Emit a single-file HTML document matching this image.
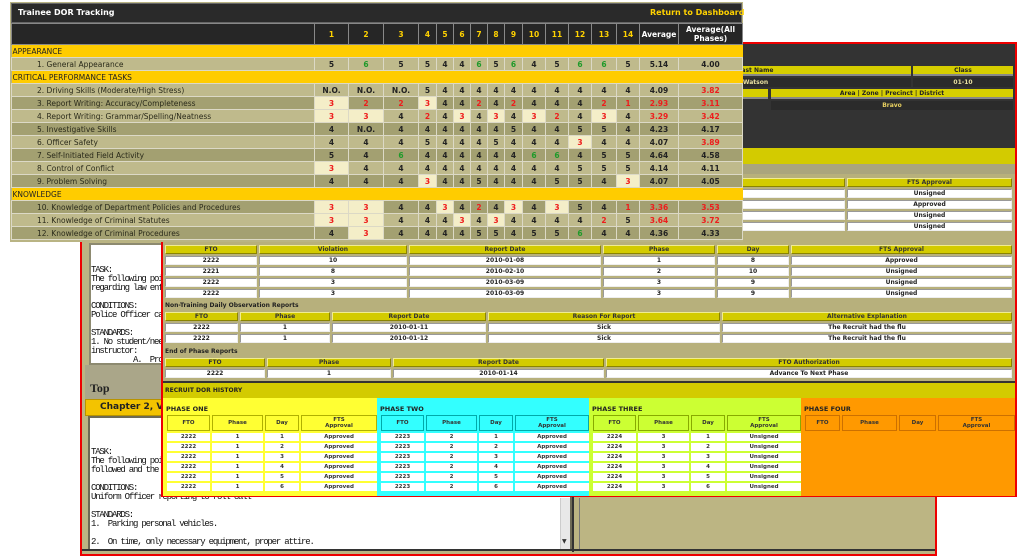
<!DOCTYPE html>
<html><head><meta charset="utf-8">
<style>
*{margin:0;padding:0;box-sizing:border-box}
body{width:1024px;height:560px;background:#fff;position:relative;overflow:hidden;font-family:"DejaVu Sans","Liberation Sans",sans-serif}
.a{position:absolute}
#back{left:80px;top:200px;width:857px;height:356px;border:2px solid #e00;background:#bcb583;z-index:1}
.mono{font-family:"Liberation Mono","DejaVu Sans Mono",monospace;font-size:9px;letter-spacing:-1.2px;line-height:9px;color:#111;white-space:pre}
#mid{left:161px;top:42px;width:856px;height:455px;border:2px solid #e00;background:#b7b07c;z-index:2}
.tb{position:absolute;border-collapse:separate;border-spacing:2px;table-layout:fixed;font-size:6px;font-weight:bold;color:#222;text-align:center}
.tb th{background:#d3cb00;height:9px;border:1px solid #f0ec90;border-right-color:#8a8400;border-bottom-color:#8a8400;line-height:7px;font-weight:bold;color:#333}
.tb td{background:#fff;height:9px;border:1px solid #999;border-right-color:#eee;border-bottom-color:#eee;line-height:7px}
.lbl{font-size:6px;font-weight:bold;color:#222}
.ph{position:absolute;top:398px;height:98px;z-index:3}
.ph .t{position:absolute;left:3px;top:7px;font-size:6.5px;font-weight:bold;color:#222}
.pt{position:absolute;top:15px;left:2px;border-collapse:separate;border-spacing:2px;table-layout:fixed;font-size:5.5px;font-weight:bold;color:#333;text-align:center}
.pt th{height:16px;line-height:6px;font-weight:bold}
.pt td{background:#fff;height:8px;line-height:6px}
#front{left:10px;top:2px;width:733px;height:240px;background:#b9b484;z-index:5}
#ft{position:absolute;left:1px;top:21px;border-collapse:collapse;table-layout:fixed;font-size:7.5px;color:#222}
#ft td{border:1px solid #dcd9c6;text-align:center;font-weight:bold;height:13px;padding:0;line-height:11px;white-space:nowrap;overflow:hidden}
#ft td.lb{text-align:left;font-weight:normal;padding-left:25px;color:#2a2a1a}
#ft tr.h td{background:#262626;color:#ffd200;height:21px;border-color:#888;line-height:9px;white-space:normal}
#ft tr.h td.w{color:#fff}
#ft tr.s td{background:#ffcc00;text-align:left;font-weight:normal;border:none;padding-left:1px;color:#222;height:13px}
#ft tr.l td{background:#bfba8c}
#ft tr.d td{background:#a3a071}
#ft tr td.c{background:#f4eec8}
#ft td.r{color:#ee1c1c}
#ft td.g{color:#1f9a2a}
</style></head><body>

<div id="back" class="a">
  <div class="a" style="left:7px;top:41px;width:500px;height:122px;background:#fff;border:2px solid #8d8a70"></div>
  <div class="a mono" style="left:9px;top:64px;">TASK:
The following points
regarding law enforcement

CONDITIONS:
Police Officer carrying

STANDARDS:
1. No student/need
instructor:
          A.  Proper</div>
  <div class="a" style="left:3px;top:163px;width:500px;height:35px;background:#aaa689"></div>
  <div class="a" style="left:8px;top:179px;font-family:'Liberation Serif',serif;font-weight:bold;font-size:12px;color:#222">Top</div>
  <div class="a" style="left:3px;top:197px;width:500px;height:17px;background:#f3c300;border:1px solid #b89300"></div>
  <div class="a" style="left:18px;top:200px;font-size:9px;font-weight:bold;color:#222">Chapter 2, Version</div>
  <div class="a" style="left:6px;top:214px;width:484px;height:135px;background:#fff;border:2px solid #6d6a55"></div>
  <div class="a" style="left:478px;top:296px;width:10px;height:51px;background:#e8e8e8;border-left:1px solid #ccc"></div>
  <div class="a" style="left:480px;top:336px;font-size:6px;color:#333">&#9660;</div>
  <div class="a mono" style="left:9px;top:246px;">TASK:
The following points
followed and the

CONDITIONS:
Uniform Officer reporting to roll call

STANDARDS:
1.  Parking personal vehicles.

2.  On time, only necessary equipment, proper attire.</div>
  <div class="a" style="left:490px;top:40px;width:2px;height:310px;background:#333"></div>
  <div class="a" style="left:497px;top:296px;width:1px;height:52px;background:#777"></div>
  <div class="a" style="left:0;top:347px;width:853px;height:2px;background:#333"></div>
</div>

<div id="mid" class="a"></div>
<div class="a" style="left:163px;top:44px;width:852px;height:104px;background:#333;z-index:2"></div>
<div class="a" style="left:600px;top:66px;width:311px;height:10px;background:#d6ce00;border-bottom:2px solid #888;z-index:2;font-size:6px;font-weight:bold;text-align:center;line-height:9px;color:#222">Last Name</div>
<div class="a" style="left:913px;top:66px;width:100px;height:10px;background:#d6ce00;border-bottom:2px solid #888;z-index:2;font-size:6px;font-weight:bold;text-align:center;line-height:9px;color:#222">Class</div>
<div class="a" style="left:600px;top:78px;width:311px;height:9px;background:#2b2b2b;z-index:2;font-size:6px;font-weight:bold;text-align:center;line-height:9px;color:#e8e0a0">Watson</div>
<div class="a" style="left:913px;top:78px;width:100px;height:9px;background:#2b2b2b;z-index:2;font-size:6px;font-weight:bold;text-align:center;line-height:9px;color:#e8e0a0">01-10</div>
<div class="a" style="left:600px;top:89px;width:168px;height:10px;background:#d6ce00;border-bottom:2px solid #888;z-index:2"></div>
<div class="a" style="left:771px;top:89px;width:242px;height:10px;background:#d6ce00;border-bottom:2px solid #888;z-index:2;font-size:6px;font-weight:bold;text-align:center;line-height:9px;color:#222">Area | Zone | Precinct | District</div>
<div class="a" style="left:771px;top:101px;width:242px;height:9px;background:#2b2b2b;z-index:2;font-size:6px;font-weight:bold;text-align:center;line-height:9px;color:#e8d060">Bravo</div>
<div class="a" style="left:163px;top:148px;width:852px;height:16px;background:#d3cb00;z-index:2"></div>
<div class="a" style="left:163px;top:164px;width:852px;height:10px;background:#aaa57d;z-index:2"></div>

<table class="tb" style="left:600px;top:176px;width:414px;z-index:2">
<colgroup><col style="width:243px"><col style="width:165px"></colgroup>
<tr><th></th><th>FTS Approval</th></tr>
<tr><td></td><td>Unsigned</td></tr>
<tr><td></td><td>Approved</td></tr>
<tr><td></td><td>Unsigned</td></tr>
<tr><td></td><td>Unsigned</td></tr>
</table>

<table class="tb" style="left:163px;top:243px;width:851px;z-index:2">
<colgroup><col style="width:92px"><col style="width:148px"><col style="width:192px"><col style="width:112px"><col style="width:72px"><col style="width:221px"></colgroup>
<tr><th>FTO</th><th>Violation</th><th>Report Date</th><th>Phase</th><th>Day</th><th>FTS Approval</th></tr>
<tr><td>2222</td><td>10</td><td>2010-01-08</td><td>1</td><td>8</td><td>Approved</td></tr>
<tr><td>2221</td><td>8</td><td>2010-02-10</td><td>2</td><td>10</td><td>Unsigned</td></tr>
<tr><td>2222</td><td>3</td><td>2010-03-09</td><td>3</td><td>9</td><td>Unsigned</td></tr>
<tr><td>2222</td><td>3</td><td>2010-03-09</td><td>3</td><td>9</td><td>Unsigned</td></tr>
</table>
<div class="a lbl" style="left:165px;top:302px;z-index:2">Non-Training Daily Observation Reports</div>
<table class="tb" style="left:163px;top:310px;width:851px;z-index:2">
<colgroup><col style="width:73px"><col style="width:90px"><col style="width:154px"><col style="width:232px"><col style="width:290px"></colgroup>
<tr><th>FTO</th><th>Phase</th><th>Report Date</th><th>Reason For Report</th><th>Alternative Explanation</th></tr>
<tr><td>2222</td><td>1</td><td>2010-01-11</td><td>Sick</td><td>The Recruit had the flu</td></tr>
<tr><td>2222</td><td>1</td><td>2010-01-12</td><td>Sick</td><td>The Recruit had the flu</td></tr>
</table>
<div class="a lbl" style="left:165px;top:348px;z-index:2">End of Phase Reports</div>
<table class="tb" style="left:163px;top:356px;width:851px;z-index:2">
<colgroup><col style="width:100px"><col style="width:124px"><col style="width:211px"><col style="width:406px"></colgroup>
<tr><th>FTO</th><th>Phase</th><th>Report Date</th><th>FTO Authorization</th></tr>
<tr><td>2222</td><td>1</td><td>2010-01-14</td><td>Advance To Next Phase</td></tr>
</table>
<div class="a" style="left:163px;top:381px;width:852px;height:2px;background:#333;z-index:2"></div>
<div class="a lbl" style="left:163px;top:383px;width:852px;height:15px;background:#d3cb00;z-index:2;padding:4px 0 0 2px">RECRUIT DOR HISTORY</div>

<div class="ph" style="left:163px;width:214px;background:#ffff33">
<div class="t">PHASE ONE</div>
<table class="pt" style="width:212px">
<colgroup><col style="width:43px"><col style="width:51px"><col style="width:34px"><col style="width:76px"></colgroup>
<tr><th style="border:1px solid #b0b000">FTO</th><th style="border:1px solid #b0b000">Phase</th><th style="border:1px solid #b0b000">Day</th><th style="border:1px solid #b0b000">FTS<br>Approval</th></tr>
<tr><td>2222</td><td>1</td><td>1</td><td>Approved</td></tr>
<tr><td>2222</td><td>1</td><td>2</td><td>Approved</td></tr>
<tr><td>2222</td><td>1</td><td>3</td><td>Approved</td></tr>
<tr><td>2222</td><td>1</td><td>4</td><td>Approved</td></tr>
<tr><td>2222</td><td>1</td><td>5</td><td>Approved</td></tr>
<tr><td>2222</td><td>1</td><td>6</td><td>Approved</td></tr>
</table></div>

<div class="ph" style="left:377px;width:212px;background:#33ffff">
<div class="t">PHASE TWO</div>
<table class="pt" style="width:210px">
<colgroup><col style="width:43px"><col style="width:51px"><col style="width:34px"><col style="width:74px"></colgroup>
<tr><th style="border:1px solid #00aaaa">FTO</th><th style="border:1px solid #00aaaa">Phase</th><th style="border:1px solid #00aaaa">Day</th><th style="border:1px solid #00aaaa">FTS<br>Approval</th></tr>
<tr><td>2223</td><td>2</td><td>1</td><td>Approved</td></tr>
<tr><td>2223</td><td>2</td><td>2</td><td>Approved</td></tr>
<tr><td>2223</td><td>2</td><td>3</td><td>Approved</td></tr>
<tr><td>2223</td><td>2</td><td>4</td><td>Approved</td></tr>
<tr><td>2223</td><td>2</td><td>5</td><td>Approved</td></tr>
<tr><td>2223</td><td>2</td><td>6</td><td>Approved</td></tr>
</table></div>

<div class="ph" style="left:589px;width:212px;background:#ccff33">
<div class="t">PHASE THREE</div>
<table class="pt" style="width:210px">
<colgroup><col style="width:43px"><col style="width:51px"><col style="width:34px"><col style="width:74px"></colgroup>
<tr><th style="border:1px solid #88aa00">FTO</th><th style="border:1px solid #88aa00">Phase</th><th style="border:1px solid #88aa00">Day</th><th style="border:1px solid #88aa00">FTS<br>Approval</th></tr>
<tr><td>2224</td><td>3</td><td>1</td><td>Unsigned</td></tr>
<tr><td>2224</td><td>3</td><td>2</td><td>Unsigned</td></tr>
<tr><td>2224</td><td>3</td><td>3</td><td>Unsigned</td></tr>
<tr><td>2224</td><td>3</td><td>4</td><td>Unsigned</td></tr>
<tr><td>2224</td><td>3</td><td>5</td><td>Unsigned</td></tr>
<tr><td>2224</td><td>3</td><td>6</td><td>Unsigned</td></tr>
</table></div>

<div class="ph" style="left:801px;width:214px;background:#ff9900">
<div class="t">PHASE FOUR</div>
<table class="pt" style="width:212px">
<colgroup><col style="width:35px"><col style="width:55px"><col style="width:37px"><col style="width:77px"></colgroup>
<tr><th style="border:1px solid #cc7000">FTO</th><th style="border:1px solid #cc7000">Phase</th><th style="border:1px solid #cc7000">Day</th><th style="border:1px solid #cc7000">FTS<br>Approval</th></tr>
</table></div>

<div id="front" class="a">
  <div class="a" style="left:1px;top:1px;width:731px;height:20px;background:#2a2a2a;border:1px solid #666"></div>
  <div class="a" style="left:8px;top:6px;font-size:8px;font-weight:bold;color:#fff;white-space:nowrap">Trainee DOR Tracking</div>
  <div class="a" style="left:640px;top:6px;font-size:8px;font-weight:bold;color:#ffd200;white-space:nowrap">Return to Dashboard</div>
<table id="ft" style="width:731px">
<colgroup><col style="width:303px"><col style="width:34px"><col style="width:35px"><col style="width:35px"><col style="width:18px"><col style="width:17px"><col style="width:17px"><col style="width:17px"><col style="width:17px"><col style="width:18px"><col style="width:23px"><col style="width:23px"><col style="width:23px"><col style="width:25px"><col style="width:23px"><col style="width:39px"><col style="width:64px"></colgroup>
<tr class="h"><td></td><td>1</td><td>2</td><td>3</td><td>4</td><td>5</td><td>6</td><td>7</td><td>8</td><td>9</td><td>10</td><td>11</td><td>12</td><td>13</td><td>14</td><td class="w">Average</td><td class="w">Average(All Phases)</td></tr>
<tr class="s"><td colspan="17">APPEARANCE</td></tr>
<tr class="l"><td class="lb">1. General Appearance</td><td>5</td><td class="g">6</td><td>5</td><td>5</td><td>4</td><td>4</td><td class="g">6</td><td>5</td><td class="g">6</td><td>4</td><td>5</td><td class="g">6</td><td class="g">6</td><td>5</td><td>5.14</td><td>4.00</td></tr>
<tr class="s"><td colspan="17">CRITICAL PERFORMANCE TASKS</td></tr>
<tr class="l"><td class="lb">2. Driving Skills (Moderate/High Stress)</td><td>N.O.</td><td>N.O.</td><td>N.O.</td><td>5</td><td>4</td><td>4</td><td>4</td><td>4</td><td>4</td><td>4</td><td>4</td><td>4</td><td>4</td><td>4</td><td>4.09</td><td class="r">3.82</td></tr>
<tr class="d"><td class="lb">3. Report Writing: Accuracy/Completeness</td><td class="r c">3</td><td class="r">2</td><td class="r">2</td><td class="r c">3</td><td>4</td><td>4</td><td class="r">2</td><td>4</td><td class="r">2</td><td>4</td><td>4</td><td>4</td><td class="r">2</td><td class="r">1</td><td class="r">2.93</td><td class="r">3.11</td></tr>
<tr class="l"><td class="lb">4. Report Writing: Grammar/Spelling/Neatness</td><td class="r c">3</td><td class="r c">3</td><td>4</td><td class="r">2</td><td>4</td><td class="r c">3</td><td>4</td><td class="r c">3</td><td>4</td><td class="r c">3</td><td class="r">2</td><td>4</td><td class="r c">3</td><td>4</td><td class="r">3.29</td><td class="r">3.42</td></tr>
<tr class="d"><td class="lb">5. Investigative Skills</td><td>4</td><td>N.O.</td><td>4</td><td>4</td><td>4</td><td>4</td><td>4</td><td>4</td><td>5</td><td>4</td><td>4</td><td>5</td><td>5</td><td>4</td><td>4.23</td><td>4.17</td></tr>
<tr class="l"><td class="lb">6. Officer Safety</td><td>4</td><td>4</td><td>4</td><td>5</td><td>4</td><td>4</td><td>4</td><td>5</td><td>4</td><td>4</td><td>4</td><td class="r c">3</td><td>4</td><td>4</td><td>4.07</td><td class="r">3.89</td></tr>
<tr class="d"><td class="lb">7. Self-Initiated Field Activity</td><td>5</td><td>4</td><td class="g">6</td><td>4</td><td>4</td><td>4</td><td>4</td><td>4</td><td>4</td><td class="g">6</td><td class="g">6</td><td>4</td><td>5</td><td>5</td><td>4.64</td><td>4.58</td></tr>
<tr class="l"><td class="lb">8. Control of Conflict</td><td class="r c">3</td><td>4</td><td>4</td><td>4</td><td>4</td><td>4</td><td>4</td><td>4</td><td>4</td><td>4</td><td>4</td><td>5</td><td>5</td><td>5</td><td>4.14</td><td>4.11</td></tr>
<tr class="d"><td class="lb">9. Problem Solving</td><td>4</td><td>4</td><td>4</td><td class="r c">3</td><td>4</td><td>4</td><td>5</td><td>4</td><td>4</td><td>4</td><td>5</td><td>5</td><td>4</td><td class="r c">3</td><td>4.07</td><td>4.05</td></tr>
<tr class="s"><td colspan="17">KNOWLEDGE</td></tr>
<tr class="d"><td class="lb">10. Knowledge of Department Policies and Procedures</td><td class="r c">3</td><td class="r c">3</td><td>4</td><td>4</td><td class="r c">3</td><td>4</td><td class="r">2</td><td>4</td><td class="r c">3</td><td>4</td><td class="r c">3</td><td>5</td><td>4</td><td class="r">1</td><td class="r">3.36</td><td class="r">3.53</td></tr>
<tr class="l"><td class="lb">11. Knowledge of Criminal Statutes</td><td class="r c">3</td><td class="r c">3</td><td>4</td><td>4</td><td>4</td><td class="r c">3</td><td>4</td><td class="r c">3</td><td>4</td><td>4</td><td>4</td><td>4</td><td class="r">2</td><td>5</td><td class="r">3.64</td><td class="r">3.72</td></tr>
<tr class="d"><td class="lb">12. Knowledge of Criminal Procedures</td><td>4</td><td class="r c">3</td><td>4</td><td>4</td><td>4</td><td>4</td><td>5</td><td>5</td><td>4</td><td>5</td><td>5</td><td class="g">6</td><td>4</td><td>4</td><td>4.36</td><td>4.33</td></tr>
</table>
</div>
</body></html>
